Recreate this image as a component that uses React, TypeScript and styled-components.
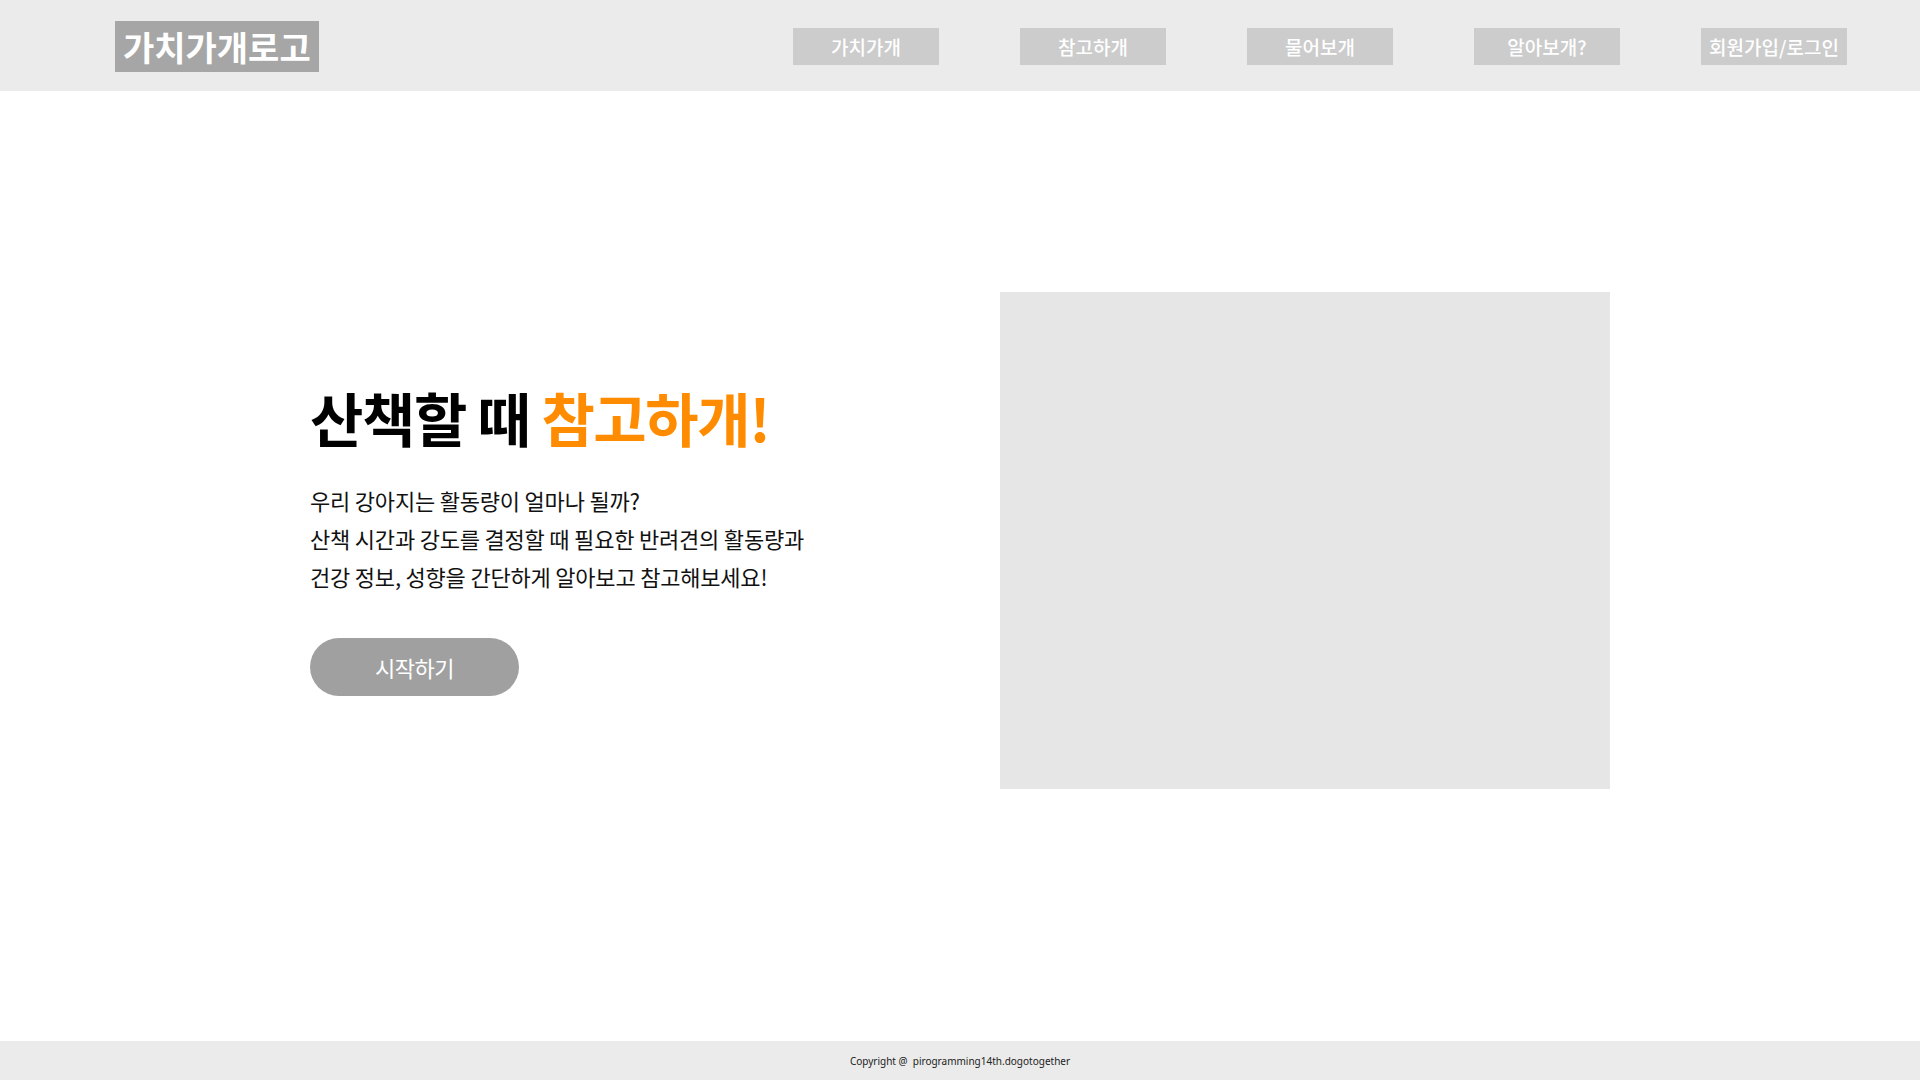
import React from "react";
import styled, { createGlobalStyle } from "styled-components";

const GlobalStyle = createGlobalStyle`
  html, body {
    margin: 0;
    padding: 0;
    background: #ffffff;
  }
  body {
    font-family: "Noto Sans CJK KR", "Noto Sans", sans-serif;
    color: #111111;
  }
  * { box-sizing: border-box; }
`;

const Page = styled.div`
  display: flex;
  flex-direction: column;
  min-height: 100vh;
`;

const Header = styled.header`
  height: 91px;
  background: #ebebeb;
  display: flex;
  align-items: center;
  justify-content: space-between;
  padding: 2px 73px 0 115px;
`;

const Logo = styled.div`
  height: 51px;
  padding: 0 8px;
  background: #a6a6a6;
  color: #ffffff;
  font-size: 34px;
  font-weight: 700;
  display: flex;
  align-items: center;
`;

const Nav = styled.nav`
  display: flex;
  align-items: center;
  gap: 81px;
`;

const NavButton = styled.a`
  width: 146px;
  height: 37px;
  background: #cccccc;
  color: #ffffff;
  font-size: 19px;
  font-weight: 500;
  display: flex;
  align-items: center;
  justify-content: center;
  text-decoration: none;
  cursor: pointer;
`;

const Main = styled.main`
  flex: 1;
  display: flex;
  align-items: center;
  justify-content: center;
  padding-bottom: 54px;
`;

const Hero = styled.section`
  width: 1300px;
  display: flex;
  align-items: center;
  justify-content: space-between;
`;

const TextColumn = styled.div`
  display: flex;
  flex-direction: column;
  align-items: flex-start;
`;

const Title = styled.h1`
  margin: 0 0 29px;
  font-size: 58px;
  line-height: 70px;
  font-weight: 700;
  letter-spacing: -1.4px;
  color: #000000;
`;

const Accent = styled.span`
  color: #ff8c00;
`;

const Description = styled.p`
  margin: 0 0 43px;
  font-size: 22px;
  line-height: 38px;
  letter-spacing: -0.2px;
  color: #111111;
`;

const StartButton = styled.button`
  width: 209px;
  height: 58px;
  border: none;
  border-radius: 29px;
  background: #a0a0a0;
  color: #ffffff;
  font-family: "Noto Sans CJK KR", sans-serif;
  font-size: 22px;
  letter-spacing: -0.5px;
  cursor: pointer;
`;

const ImageBox = styled.div`
  width: 610px;
  height: 497px;
  margin-top: 2px;
  background: #e6e6e6;
`;

const Footer = styled.footer`
  height: 39px;
  background: #ebebeb;
  display: flex;
  align-items: center;
  justify-content: center;
  font-family: "Noto Sans", "Noto Sans CJK KR", sans-serif;
  font-size: 10px;
  color: #222222;
  white-space: pre;
`;

const navItems = ["가치가개", "참고하개", "물어보개", "알아보개?", "회원가입/로그인"];

export default function App() {
  return (
    <Page>
      <GlobalStyle />
      <Header>
        <Logo>가치가개로고</Logo>
        <Nav>
          {navItems.map((item) => (
            <NavButton key={item}>{item}</NavButton>
          ))}
        </Nav>
      </Header>
      <Main>
        <Hero>
          <TextColumn>
            <Title>
              산책할 때 <Accent>참고하개!</Accent>
            </Title>
            <Description>
              우리 강아지는 활동량이 얼마나 될까?
              <br />
              산책 시간과 강도를 결정할 때 필요한 반려견의 활동량과
              <br />
              건강 정보, 성향을 간단하게 알아보고 참고해보세요!
            </Description>
            <StartButton>시작하기</StartButton>
          </TextColumn>
          <ImageBox />
        </Hero>
      </Main>
      <Footer>{"Copyright @  pirogramming14th.dogotogether"}</Footer>
    </Page>
  );
}
